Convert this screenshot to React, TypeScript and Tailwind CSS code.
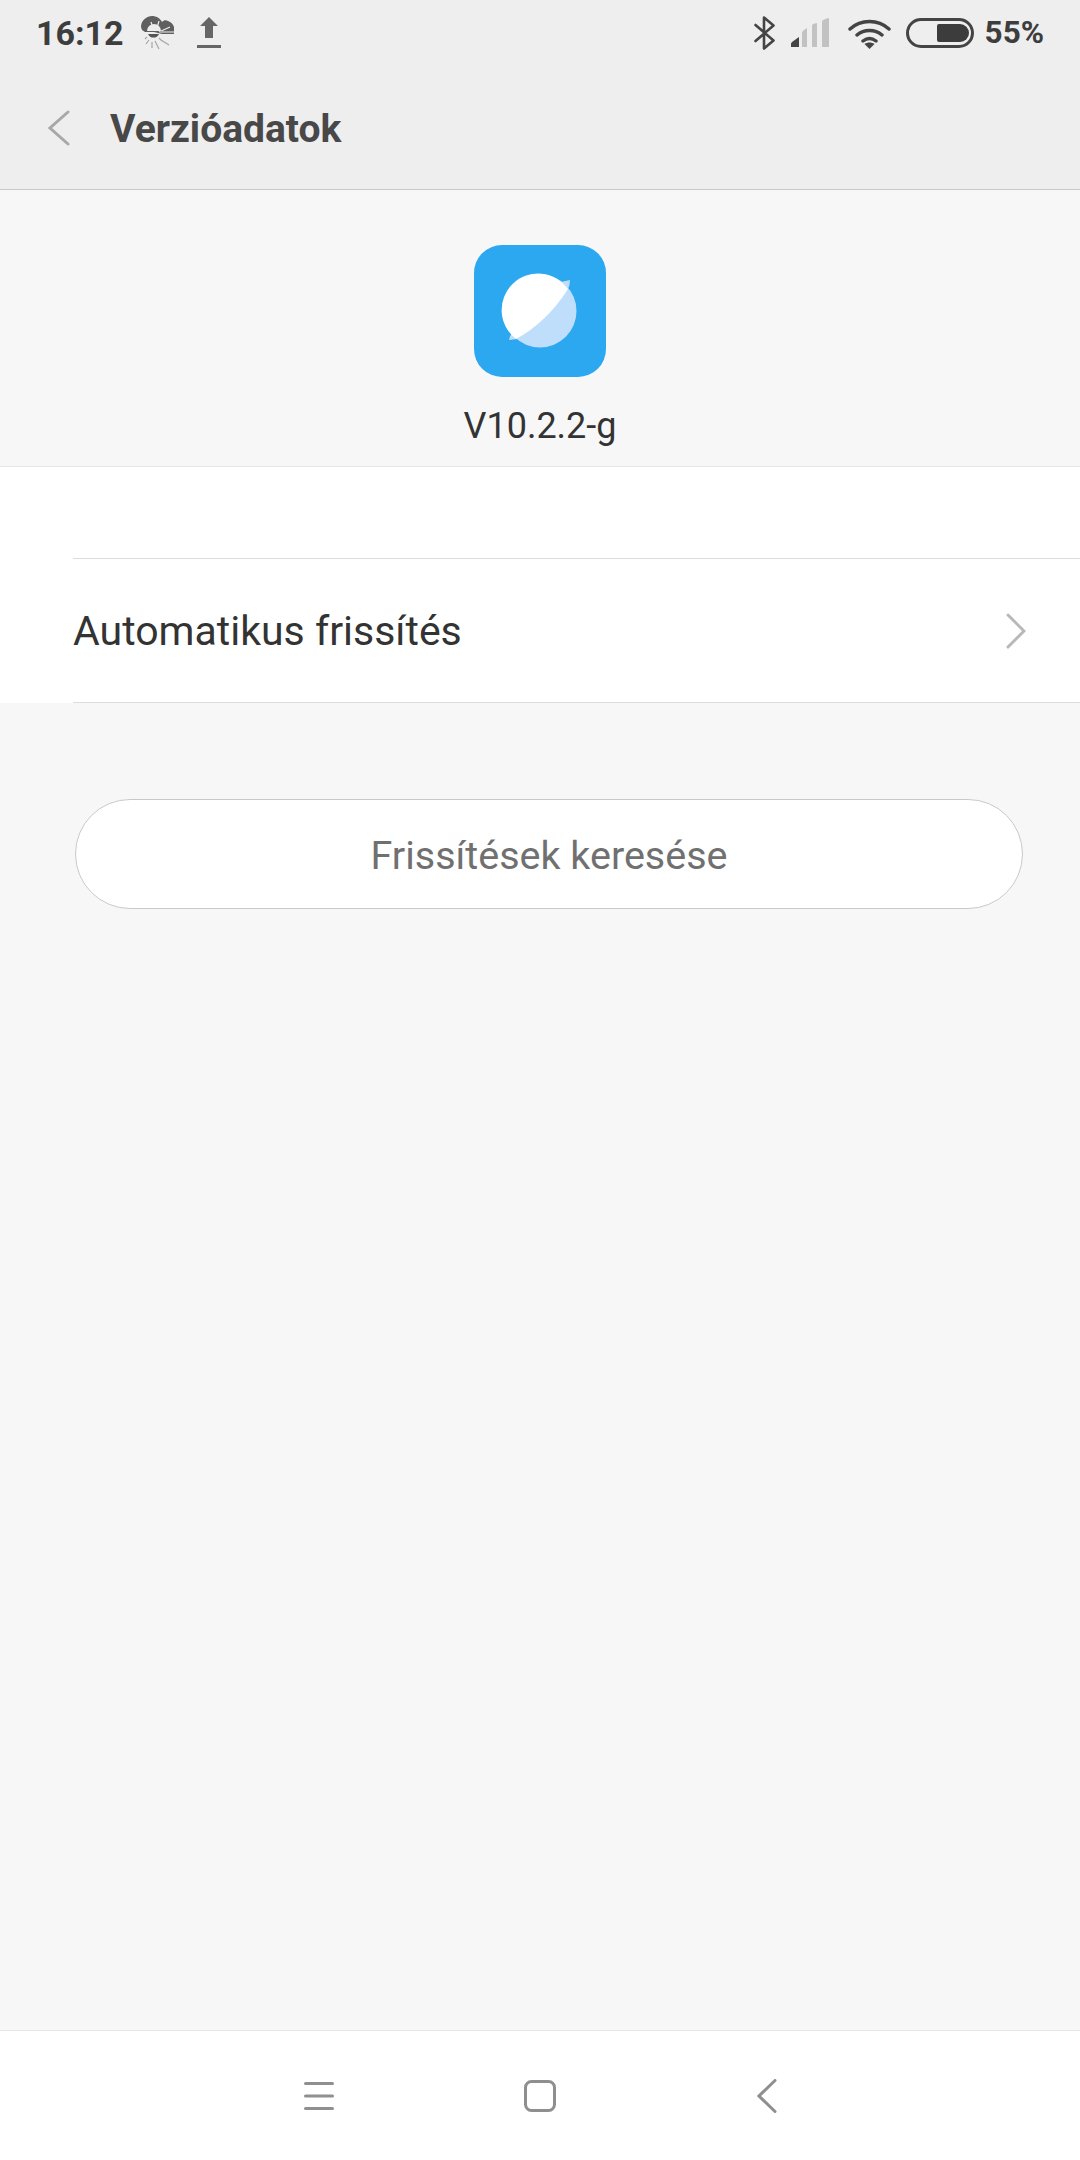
import React from 'react';

const WeatherIcon = () => (
  <svg width="36" height="36" viewBox="0 0 36 36" className="ml-[16px] shrink-0">
    <path d="M1 12C1 5 7 1 12 1c4 0 8 2 10 6 2-2 4-2 6-1 3 1 5 3 6 6v7H22l-8-2H5l-3-2z" fill="#5f5f5f" />
    <path d="M7 16a7 7 0 0 1 14 0z" fill="#eeeeee" />
    <path d="M8 19h11a6 6 0 0 1-11 0z" fill="#555555" />
    <path d="M11 7l2 6M19 6l-2 7M30 12l-11 5" stroke="#eeeeee" strokeWidth="1.2" />
    <path d="M34 17H20" stroke="#a8a8a8" strokeWidth="2" />
    <path d="M5 24l2-2M6 29l3-4M12 33v-6M19 34l-4-8M22 26l-3-3M29 30l-8-5" stroke="#a6a6a6" strokeWidth="1.2" />
  </svg>
);

const UploadIcon = () => (
  <svg width="24" height="32" viewBox="0 0 24 32" className="ml-[21px] shrink-0">
    <path d="M12 0l9 9h-5v12H8V9H3z" fill="#666666" />
    <rect x="0" y="28" width="24" height="3" fill="#666666" />
  </svg>
);

const BluetoothIcon = () => (
  <svg width="22" height="34" viewBox="0 0 22 34" fill="none" className="shrink-0">
    <path d="M1.500 9l18 15.500L10 32.500V1.500l9.500 8L1.500 25" stroke="#444444" strokeWidth="2.600" strokeLinejoin="round" strokeLinecap="round" />
  </svg>
);

const SignalIcon = () => (
  <svg width="40" height="30" viewBox="0 0 40 30" className="ml-[15px] shrink-0">
    <path d="M0 29v-3q0-1 1-2l7-5v10z" fill="#444444" />
    <path d="M11 29V15q0-2 2-3l3-2v19zM21 29V8q0-1 1-2l4-1v24zM31 29V4q0-1 1-2l5-2q1 0 1 1v28z" fill="#c2c2c2" />
  </svg>
);

const WifiIcon = () => (
  <svg width="43" height="31" viewBox="0 0 43 31" fill="none" className="ml-[17px] shrink-0">
    <path d="M2 11c11-10 28-10 39 0M9 17c7-6 18-6 25 0M15 23c4-3 9-3 13 0" stroke="#444444" strokeWidth="3.400" strokeLinecap="round" />
    <path d="M21.500 31l-5-5c3-2 7-2 10 0z" fill="#444444" />
  </svg>
);

const BatteryIcon = () => (
  <div className="ml-[15px] flex h-[30px] w-[68px] shrink-0 items-center justify-end rounded-full border-[3px] border-[#444444] pr-[2px]">
    <div className="h-[18px] w-[32px] rounded-l-[2px] rounded-r-[9px] bg-[#3c3c3c]" />
  </div>
);

const AppIcon = () => (
  <div className="h-[132px] w-[132px] rounded-[28px] bg-[#2ca8f1]">
    <svg width="132" height="132" viewBox="0 0 132 132">
      <circle cx="66" cy="66" r="36.500" fill="#bfdefc" />
      <path d="M87 37L96 35Q96 40 94 44zM35 95Q36 90 39 87L43 94z" fill="#bfdefc" />
      <path d="M42 94A36.500 36.500 0 1 1 94 44Q73 77 42 94z" fill="#ffffff" />
    </svg>
  </div>
);

const Chevron = ({ points, color, width }: { points: string; color: string; width: number }) => (
  <polyline points={points} fill="none" stroke={color} strokeWidth={width} strokeLinecap="round" strokeLinejoin="miter" />
);

export default function App() {
  return (
    <div className="flex h-[2160px] w-[1080px] flex-col overflow-hidden bg-[#f7f7f7] font-['Roboto',sans-serif]">
      <header className="h-[190px] shrink-0 border-b border-[#c9c9c9] bg-[#eeeeee]">
        <div className="flex h-[66px] items-center pl-[36px] pr-[36px]">
          <span className="text-[34px] font-bold leading-none text-[#3d3d3d]">16:12</span>
          <WeatherIcon />
          <UploadIcon />
          <div className="ml-auto flex items-center">
            <BluetoothIcon />
            <SignalIcon />
            <WifiIcon />
            <BatteryIcon />
            <span className="ml-[11px] text-[31.5px] font-bold leading-none text-[#3d3d3d]">55%</span>
          </div>
        </div>
        <div className="flex h-[123px] items-center pl-[48px]">
          <svg width="22" height="36" viewBox="0 0 22 36" className="shrink-0">
            <Chevron points="20,2 2,18 20,34" color="#a8a8a8" width={3} />
          </svg>
          <h1 className="ml-[40px] pt-[3px] text-[39px] font-bold leading-none text-[#484848]">Verzióadatok</h1>
        </div>
      </header>

      <section className="flex h-[277px] shrink-0 flex-col items-center border-b border-[#e6e6e6] pt-[55px]">
        <AppIcon />
        <p className="mt-[29px] text-[36px] leading-[40px] text-[#333333]">V10.2.2-g</p>
      </section>

      <section className="h-[236px] shrink-0 bg-white pl-[73px]">
        <div className="h-[92px] border-b border-[#dddddd]" />
        <div className="flex h-[144px] items-center justify-between border-b border-[#dddddd] pr-[54px]">
          <span className="pt-[3px] text-[41px] text-[#333333]">Automatikus frissítés</span>
          <svg width="20" height="36" viewBox="0 0 20 36" className="shrink-0">
            <Chevron points="2,2 18,18 2,34" color="#b8b8b8" width={3} />
          </svg>
        </div>
      </section>

      <div className="flex-1 px-[75px] pt-[96px]">
        <button className="flex h-[110px] w-[948px] items-center justify-center rounded-full border border-[#c9c9c9] bg-white pt-[4px] text-[39.5px] text-[#707070]">
          Frissítések keresése
        </button>
      </div>

      <nav className="flex h-[130px] shrink-0 items-center justify-center border-t border-[#e6e6e6] bg-white">
        <div className="flex w-[473px] items-center justify-between">
          <svg width="30" height="30" viewBox="0 0 30 30" className="shrink-0">
            <path d="M1.500 2.500h27M1.500 15h27M1.500 27.500h27" stroke="#8f8f8f" strokeWidth="3" strokeLinecap="round" />
          </svg>
          <svg width="32" height="32" viewBox="0 0 32 32" className="mr-[10px] shrink-0">
            <rect x="1.500" y="1.500" width="29" height="29" rx="6" fill="none" stroke="#8f8f8f" strokeWidth="3" />
          </svg>
          <svg width="20" height="34" viewBox="0 0 20 34" className="shrink-0">
            <Chevron points="18,1.500 2,17 18,32.500" color="#8f8f8f" width={3} />
          </svg>
        </div>
      </nav>
    </div>
  );
}
